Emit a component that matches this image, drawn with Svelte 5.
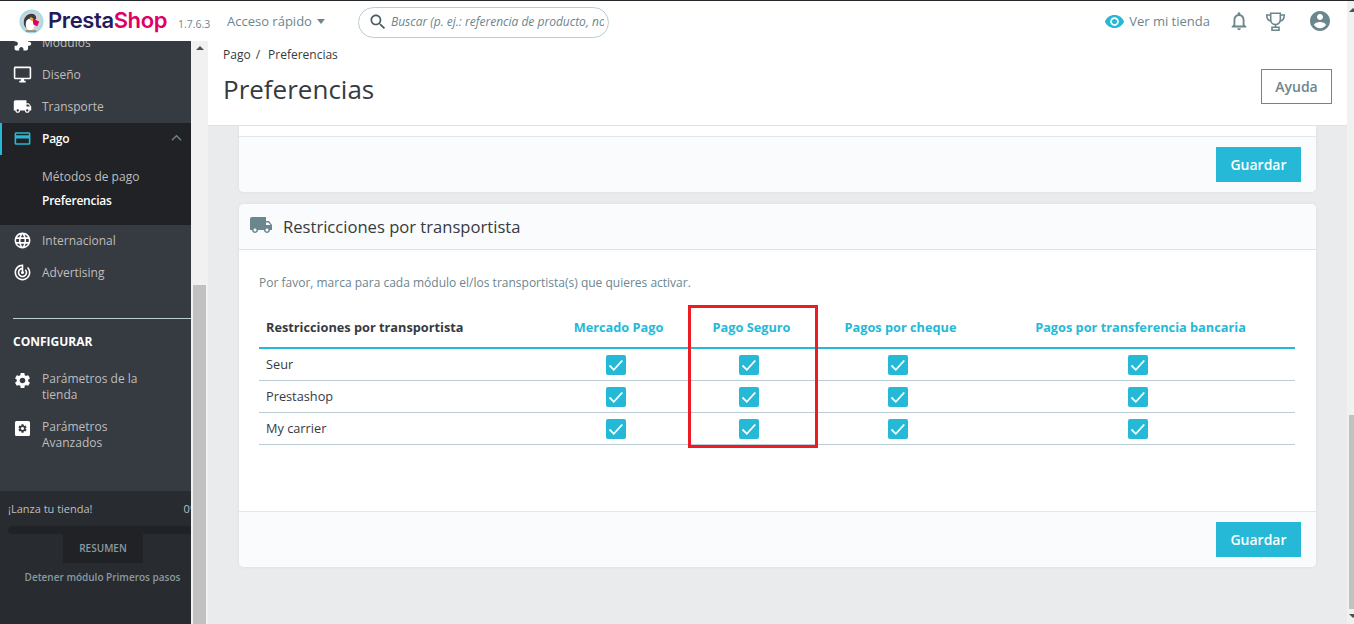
<script>
  const navTop = [
    { label: 'Módulos', d: 'M20.5 11H19V7c0-1.1-.9-2-2-2h-4V3.5C13 2.12 11.88 1 10.5 1S8 2.12 8 3.5V5H4c-1.1 0-1.99.9-1.99 2v3.8H3.5c1.49 0 2.7 1.21 2.7 2.7s-1.21 2.7-2.7 2.7H2V20c0 1.1.9 2 2 2h3.8v-1.5c0-1.49 1.21-2.7 2.7-2.7 1.49 0 2.7 1.21 2.7 2.7V22H17c1.1 0 2-.9 2-2v-4h1.5c1.38 0 2.5-1.12 2.5-2.5S21.88 11 20.5 11z' },
    { label: 'Diseño', d: 'M21 2H3c-1.1 0-2 .9-2 2v12c0 1.1.9 2 2 2h7v2H8v2h8v-2h-2v-2h7c1.1 0 2-.9 2-2V4c0-1.1-.9-2-2-2zm0 14H3V4h18v12z' },
    { label: 'Transporte', d: truck() }
  ];
  const navBottom = [
    { label: 'Internacional', d: 'M11.99 2C6.47 2 2 6.48 2 12s4.47 10 9.99 10C17.52 22 22 17.52 22 12S17.52 2 11.99 2zm6.93 6h-2.95c-.32-1.25-.78-2.45-1.38-3.56 1.84.63 3.37 1.91 4.33 3.56zM12 4.04c.83 1.2 1.48 2.53 1.91 3.96h-3.82c.43-1.43 1.08-2.76 1.91-3.96zM4.26 14C4.1 13.36 4 12.69 4 12s.1-1.36.26-2h3.38c-.08.66-.14 1.32-.14 2 0 .68.06 1.34.14 2H4.26zm.82 2h2.95c.32 1.25.78 2.45 1.38 3.56-1.84-.63-3.37-1.9-4.33-3.56zm2.95-8H5.08c.96-1.66 2.49-2.93 4.33-3.56C8.81 5.55 8.35 6.75 8.03 8zM12 19.96c-.83-1.2-1.48-2.53-1.91-3.96h3.82c-.43 1.43-1.08 2.76-1.91 3.96zM14.34 14H9.66c-.09-.66-.16-1.32-.16-2 0-.68.07-1.35.16-2h4.68c.09.65.16 1.32.16 2 0 .68-.07 1.34-.16 2zm.25 5.56c.6-1.11 1.06-2.31 1.38-3.56h2.95c-.96 1.65-2.49 2.93-4.33 3.56zM16.36 14c.08-.66.14-1.32.14-2 0-.68-.06-1.34-.14-2h3.38c.16.64.26 1.31.26 2s-.1 1.36-.26 2h-3.38z' },
    { label: 'Advertising', d: 'M19.07 4.93l-1.41 1.41C19.1 7.79 20 9.79 20 12c0 4.42-3.58 8-8 8s-8-3.58-8-8c0-4.08 3.05-7.44 7-7.93v2.02C8.16 6.57 6 9.03 6 12c0 3.31 2.69 6 6 6s6-2.69 6-6c0-1.66-.67-3.16-1.76-4.24l-1.41 1.41C15.55 9.9 16 10.9 16 12c0 2.21-1.79 4-4 4s-4-1.79-4-4c0-1.86 1.28-3.41 3-3.86v2.14c-.6.35-1 .98-1 1.72 0 1.1.9 2 2 2s2-.9 2-2c0-.74-.4-1.38-1-1.72V2h-1C6.48 2 2 6.48 2 12s4.48 10 10 10 10-4.48 10-10c0-2.76-1.12-5.26-2.93-7.07z' }
  ];
  const gear = 'M19.14 12.94c.04-.3.06-.61.06-.94 0-.32-.02-.64-.07-.94l2.03-1.58c.18-.14.23-.41.12-.61l-1.92-3.32c-.12-.22-.37-.29-.59-.22l-2.39.96c-.5-.38-1.03-.7-1.62-.94l-.36-2.54c-.04-.24-.24-.41-.48-.41h-3.84c-.24 0-.43.17-.47.41l-.36 2.54c-.59.24-1.13.57-1.62.94l-2.39-.96c-.22-.08-.47 0-.59.22L2.74 8.87c-.12.21-.08.47.12.61l2.03 1.58c-.05.3-.09.63-.09.94s.02.64.07.94l-2.03 1.58c-.18.14-.23.41-.12.61l1.92 3.32c.12.22.37.29.59.22l2.39-.96c.5.38 1.03.7 1.62.94l.36 2.54c.05.24.24.41.48.41h3.84c.24 0 .44-.17.47-.41l.36-2.54c.59-.24 1.13-.56 1.62-.94l2.39.96c.22.08.47 0 .59-.22l1.92-3.32c.12-.22.07-.47-.12-.61l-2.01-1.58zM12 15.6c-1.98 0-3.6-1.62-3.6-3.6s1.62-3.6 3.6-3.6 3.6 1.62 3.6 3.6-1.62 3.6-3.6 3.6z';

  const carriers = ['Seur', 'Prestashop', 'My carrier'];
  const modules = ['Mercado Pago', 'Pago Seguro', 'Pagos por cheque', 'Pagos por transferencia bancaria'];

  function truck() {
    return 'M20 8h-3V4H3c-1.1 0-2 .9-2 2v11h2c0 1.66 1.34 3 3 3s3-1.34 3-3h6c0 1.66 1.34 3 3 3s3-1.34 3-3h2v-5l-3-4zM6 18.5c-.83 0-1.5-.67-1.5-1.5s.67-1.5 1.5-1.5 1.5.67 1.5 1.5-.67 1.5-1.5 1.5zm13.5-9l1.96 2.5H17V9.5h2.5zm-1.5 9c-.83 0-1.5-.67-1.5-1.5s.67-1.5 1.5-1.5 1.5.67 1.5 1.5-.67 1.5-1.5 1.5z';
  }
</script>

{#snippet icon(d, cls = '')}
  <svg class={cls} viewBox="0 0 24 24" fill="currentColor"><path {d} /></svg>
{/snippet}

<div class="page">
  <div class="window">
    <header class="topbar">
      <div class="logo">
        <svg class="puffin" viewBox="0 0 26 26">
          <circle cx="13" cy="13" r="12.5" fill="#a4dbe8" />
          <circle cx="13" cy="13" r="10.5" fill="#cfd3d4" />
          <path d="M5 14c0-6 4-9 8-9 3 0 5 2 5 5l-3 3-1 7H8c-2-1-3-3-3-6z" fill="#3a3c45" />
          <path d="M8 12c2-3 6-3 7 0l1 5c0 3-2 5-4 5-3 0-5-2-5-5 0-2 0-3 1-5z" fill="#fff" />
          <path d="M14 10l7 3-2 5-4-2z" fill="#df0067" />
          <path d="M12 8l3 2-1 3-3-2z" fill="#f5a623" />
          <path d="M7 22h11v2H7z" fill="#9a8f7a" />
        </svg>
        <span class="wordmark"><span class="presta">Presta</span><span class="shop">Shop</span></span>
        <span class="version">1.7.6.3</span>
      </div>
      <div class="quick">Acceso rápido <span class="caret"></span></div>
      <div class="search">
        <svg viewBox="0 0 24 24" fill="currentColor"><path d="M15.5 14h-.79l-.28-.27C15.41 12.59 16 11.11 16 9.5 16 5.91 13.09 3 9.5 3S3 5.91 3 9.5 5.91 16 9.5 16c1.61 0 3.09-.59 4.23-1.57l.27.28v.79l5 4.99L20.49 19l-4.99-5zm-6 0C7.01 14 5 11.99 5 9.5S7.01 5 9.5 5 14 7.01 14 9.5 11.99 14 9.5 14z" /></svg>
        <span class="placeholder">Buscar (p. ej.: referencia de producto, nombre de cliente…)</span>
      </div>
      <div class="top-right">
        <svg class="eye" viewBox="0 0 24 24" fill="currentColor"><path d="M12 4.5C7 4.5 2.73 7.61 1 12c1.73 4.39 6 7.5 11 7.5s9.27-3.11 11-7.5c-1.73-4.39-6-7.5-11-7.5zM12 17c-2.76 0-5-2.24-5-5s2.24-5 5-5 5 2.24 5 5-2.24 5-5 5zm0-8c-1.66 0-3 1.34-3 3s1.34 3 3 3 3-1.34 3-3-1.34-3-3-3z" /></svg>
        <span class="shop-link">Ver mi tienda</span>
        <svg class="bell" viewBox="0 0 24 24" fill="currentColor"><path d="M12 22c1.1 0 2-.9 2-2h-4c0 1.1.9 2 2 2zm6-6v-5c0-3.07-1.63-5.64-4.5-6.32V4c0-.83-.67-1.5-1.5-1.5s-1.5.67-1.5 1.5v.68C7.64 5.36 6 7.92 6 11v5l-2 2v1h16v-1l-2-2zm-2 1H8v-6c0-2.48 1.51-4.5 4-4.5s4 2.02 4 4.5v6z" /></svg>
        <svg class="trophy" viewBox="0 0 24 24" fill="none" stroke="currentColor" stroke-width="1.800"><path d="M6.500 2.500h11v7.500a5.500 5.500 0 0 1-11 0z" /><path d="M6.500 4.500H2c0 4.500 1.800 6.500 5 7M17.500 4.500H22c0 4.500-1.800 6.500-5 7M12 15.500v3" /><path d="M8 18.500h8v3.500H8z" /></svg>
        <svg class="account" viewBox="0 0 24 24" fill="currentColor"><path d="M12 2C6.480 2 2 6.480 2 12s4.480 10 10 10 10-4.480 10-10S17.520 2 12 2zm0 3c1.660 0 3 1.340 3 3s-1.340 3-3 3-3-1.340-3-3 1.340-3 3-3zm0 14.200c-2.500 0-4.710-1.280-6-3.220.030-1.990 4-3.080 6-3.080 1.990 0 5.970 1.090 6 3.080-1.290 1.940-3.500 3.220-6 3.220z" /></svg>
      </div>
    </header>

    <div class="body">
      <aside class="sidebar">
        <nav class="nav">
          {#each navTop as item}
            <div class="item">{@render icon(item.d, 'nav-icon')}<span>{item.label}</span></div>
          {/each}
          <div class="item active">
            <svg class="nav-icon" viewBox="0 0 24 24" fill="currentColor"><path d="M20 4H4c-1.110 0-1.990.890-1.990 2L2 18c0 1.110.890 2 2 2h16c1.110 0 2-.890 2-2V6c0-1.110-.890-2-2-2zm0 14H4v-6h16v6zm0-10H4V6h16v2z" /></svg>
            <span>Pago</span>
            <svg class="chevron" viewBox="0 0 12 8" fill="none" stroke="currentColor" stroke-width="1.500"><path d="M1 6.500l5-5 5 5" /></svg>
          </div>
          <div class="submenu">
            <div class="sub">Métodos de pago</div>
            <div class="sub current">Preferencias</div>
          </div>
          {#each navBottom as item}
            <div class="item">{@render icon(item.d, 'nav-icon')}<span>{item.label}</span></div>
          {/each}
          <div class="divider"></div>
          <div class="section">CONFIGURAR</div>
          <div class="item tall">{@render icon(gear, 'nav-icon')}<span>Parámetros de la tienda</span></div>
          <div class="item tall">
            <svg class="nav-icon" viewBox="0 0 24 24"><rect x="2.500" y="2.500" width="19" height="19" rx="2" fill="currentColor" /><g transform="translate(5.400 5.400) scale(.55)"><path d={gear} fill="#363a41" /></g></svg>
            <span>Parámetros Avanzados</span>
          </div>
        </nav>
        <div class="onboarding">
          <div class="launch"><span>¡Lanza tu tienda!</span><span>0%</span></div>
          <div class="progress"></div>
          <div class="resume">RESUMEN</div>
          <div class="stop">Detener módulo Primeros pasos</div>
        </div>
      </aside>

      <div class="side-scroll">
        <span class="arrow"></span>
        <div class="side-thumb"></div>
      </div>

      <main class="main">
        <div class="page-head">
          <div class="crumbs"><span>Pago</span><span class="slash">/</span><span>Preferencias</span></div>
          <div class="title-row">
            <h1>Preferencias</h1>
            <button class="help">Ayuda</button>
          </div>
        </div>

        <div class="content">
          <section class="card cut">
            <div class="stub"></div>
            <div class="card-foot"><button class="save">Guardar</button></div>
          </section>

          <section class="card">
            <div class="card-head">
              {@render icon(truck(), 'head-icon')}
              <h2>Restricciones por transportista</h2>
            </div>
            <div class="card-body">
              <p class="hint">Por favor, marca para cada módulo el/los transportista(s) que quieres activar.</p>
              <div class="table-wrap">
                <table>
                  <colgroup>
                    <col style="width: 290px" />
                    <col style="width: 134px" />
                    <col style="width: 132px" />
                    <col style="width: 166px" />
                    <col style="width: 314px" />
                  </colgroup>
                  <thead>
                    <tr>
                      <th class="first">Restricciones por transportista</th>
                      {#each modules as m}<th>{m}</th>{/each}
                    </tr>
                  </thead>
                  <tbody>
                    {#each carriers as c}
                      <tr>
                        <td class="first">{c}</td>
                        {#each modules as m}
                          <td class="check" title={m}>
                            <span class="box"><svg viewBox="0 0 20 20" fill="none" stroke="#fff" stroke-width="1.800"><path d="M3.500 10.500l4.300 4.300 8.500-9.300" /></svg></span>
                          </td>
                        {/each}
                      </tr>
                    {/each}
                  </tbody>
                </table>
                <div class="marker"></div>
              </div>
            </div>
            <div class="card-foot"><button class="save">Guardar</button></div>
          </section>
        </div>
      </main>
    </div>
  </div>

  <div class="page-scroll">
    <span class="arrow up"></span>
    <div class="page-thumb"></div>
    <span class="arrow down"></span>
  </div>
</div>

<style>
  :global(body) {
    margin: 0;
    overflow: hidden;
    font-family: "Open Sans", "Liberation Sans", sans-serif;
    color: #363a41;
  }

  .page {
    display: flex;
    height: 624px;
    box-sizing: border-box;
    border-top: 1px solid #25282c;
    overflow: hidden;
  }

  .window {
    flex: 1;
    min-width: 0;
    display: flex;
    flex-direction: column;
  }

  /* top bar */
  .topbar {
    height: 40px;
    flex: none;
    display: flex;
    align-items: center;
    background: #fff;
  }

  .logo {
    display: flex;
    align-items: center;
    width: 227px;
    flex: none;
    box-sizing: border-box;
    padding-left: 19px;
  }

  .puffin {
    width: 25px;
    height: 25px;
    flex: none;
  }

  .wordmark {
    margin-left: 4px;
    margin-bottom: 2px;
    font-family: Inter, "Open Sans", sans-serif;
    font-size: 22px;
    font-weight: 600;
    letter-spacing: -0.4px;
    line-height: 28px;
  }

  .presta {
    color: #251b5b;
  }

  .shop {
    color: #df0067;
  }

  .version {
    margin-left: 11px;
    margin-top: 5px;
    font-size: 10.5px;
    color: #6c868e;
  }

  .quick {
    width: 131px;
    flex: none;
    font-size: 13px;
    color: #6c868e;
    display: flex;
    align-items: center;
    gap: 5px;
  }

  .caret {
    border-top: 5px solid #6c868e;
    border-left: 4.5px solid transparent;
    border-right: 4.5px solid transparent;
  }

  .search {
    width: 251px;
    height: 31px;
    flex: none;
    box-sizing: border-box;
    border: 1px solid #bbcdd2;
    border-radius: 16px;
    display: flex;
    align-items: center;
    padding: 0 4px 2px 9px;
    overflow: hidden;
    margin-top: 3px;
    color: #4a5c62;
  }

  .search svg {
    width: 20px;
    height: 20px;
    flex: none;
  }

  .placeholder {
    margin-left: 3px;
    font-size: 12px;
    font-style: italic;
    color: #6c868e;
    white-space: nowrap;
    overflow: hidden;
  }

  .top-right {
    margin-left: auto;
    display: flex;
    align-items: center;
    color: #6c868e;
    padding-right: 15px;
  }

  .eye {
    width: 21px;
    height: 21px;
    color: #25b9d7;
  }

  .shop-link {
    margin-left: 4px;
    font-size: 13px;
  }

  .bell {
    width: 22px;
    height: 22px;
    margin-left: 18px;
  }

  .trophy {
    width: 21px;
    height: 21px;
    margin-left: 15px;
  }

  .account {
    width: 24px;
    height: 24px;
    margin-left: 22px;
  }

  .body {
    flex: 1;
    min-height: 0;
    display: flex;
  }

  /* sidebar */
  .sidebar {
    width: 191px;
    flex: none;
    background: #363a41;
    display: flex;
    flex-direction: column;
    overflow: hidden;
  }

  .nav {
    flex: 1;
    min-height: 0;
    overflow: hidden;
  }

  .nav > :first-child {
    margin-top: -14px;
  }

  .item {
    display: flex;
    align-items: center;
    height: 32px;
    box-sizing: border-box;
    padding: 0 0 2px 13px;
    font-size: 12px;
    color: #bebebe;
    position: relative;
  }

  .item :global(.nav-icon) {
    width: 19px;
    height: 19px;
    flex: none;
    margin-right: 10px;
    color: #fff;
  }

  .item.active {
    background: #202226;
    color: #fff;
    font-weight: 600;
    letter-spacing: -0.25px;
    box-shadow: inset 2px 0 0 #25b9d7;
  }

  .item.active .nav-icon {
    color: #25b9d7;
  }

  .chevron {
    width: 11px;
    height: 8px;
    margin-left: auto;
    margin-right: 9px;
    color: #6c868e;
  }

  .submenu {
    background: #202226;
    padding: 10px 0 12px 42px;
  }

  .sub {
    height: 24px;
    line-height: 24px;
    font-size: 12px;
    color: #bebebe;
  }

  .sub.current {
    color: #fff;
    font-weight: 600;
    letter-spacing: -0.25px;
  }

  .divider {
    height: 1px;
    margin: 29px 0 0 13px;
    background: #bbcdd2;
  }

  .section {
    margin: 14px 0 20px 13px;
    font-size: 12px;
    font-weight: 700;
    line-height: 18px;
    color: #fff;
  }

  .item.tall {
    align-items: flex-start;
    height: auto;
    line-height: 16px;
    padding: 0 30px 0 13px;
    margin-bottom: 16px;
  }

  .onboarding {
    height: 133px;
    flex: none;
    background: #282b30;
    padding-top: 9px;
    box-sizing: border-box;
  }

  .launch {
    display: flex;
    justify-content: space-between;
    padding-left: 8px;
    margin-right: -8px;
    font-size: 11px;
    line-height: 18px;
    color: #bebebe;
  }

  .progress {
    height: 8px;
    margin: 8px -10px 0 8px;
    border-radius: 4px;
    background: #202226;
  }

  .resume {
    width: 80px;
    height: 29px;
    margin: 0 0 0 63px;
    background: #202226;
    color: #8a9ba0;
    font-size: 10px;
    font-weight: 600;
    line-height: 29px;
    text-align: center;
  }

  .stop {
    margin-top: 5px;
    text-align: center;
    padding-left: 14px;
    font-size: 10px;
    font-weight: 600;
    line-height: 18px;
    color: #8a9ba0;
    white-space: nowrap;
  }

  .side-scroll {
    width: 17px;
    flex: none;
    background: #f1f1f1;
    position: relative;
    display: flex;
    flex-direction: column;
    align-items: center;
  }

  .side-scroll .arrow {
    margin-top: 5px;
    border-bottom: 4px solid #505050;
    border-left: 4px solid transparent;
    border-right: 4px solid transparent;
  }

  .side-thumb {
    margin-top: auto;
    width: 13px;
    height: 339px;
    background: #c1c1c1;
  }

  /* main column */
  .main {
    flex: 1;
    min-width: 0;
    display: flex;
    flex-direction: column;
    background: #eaebec;
  }

  .page-head {
    height: 85px;
    flex: none;
    box-sizing: border-box;
    background: #fff;
    border-bottom: 1px solid #dfe3e5;
    padding: 5px 15px 0 15px;
  }

  .crumbs {
    display: flex;
    gap: 5px;
    font-size: 12px;
    line-height: 17px;
    color: #363a41;
  }

  .slash {
    margin-right: 3px;
  }

  .title-row {
    display: flex;
    align-items: flex-start;
    justify-content: space-between;
    margin-top: 6px;
  }

  h1 {
    margin: 2px 0 0;
    font-size: 26px;
    font-weight: 400;
    line-height: 36px;
    color: #363a41;
  }

  .help {
    width: 71px;
    height: 35px;
    box-sizing: border-box;
    background: #fff;
    border: 1px solid #6c868e;
    color: #6c868e;
    font: 600 14px "Open Sans", sans-serif;
  }

  .content {
    flex: 1;
    padding: 0 31px;
    overflow: hidden;
  }

  .card {
    background: #fff;
    border-radius: 0 0 5px 5px;
    box-shadow: 0 0 4px rgba(0, 0, 0, 0.06);
    margin-bottom: 12px;
  }

  .card:not(.cut) {
    border-radius: 5px;
  }

  .stub {
    height: 10px;
  }

  .card-foot {
    height: 56px;
    box-sizing: border-box;
    background: #fafbfc;
    border-top: 1px solid #dfe8ea;
    border-radius: 0 0 5px 5px;
    display: flex;
    justify-content: flex-end;
    align-items: flex-start;
    padding: 10px 15px 0 0;
  }

  .save {
    width: 85px;
    height: 35px;
    border: 0;
    background: #25b9d7;
    color: #fff;
    font: 600 14px "Open Sans", sans-serif;
  }

  .card-head {
    height: 46px;
    box-sizing: border-box;
    background: #fafbfc;
    border-bottom: 1px solid #dfe3e5;
    border-radius: 5px 5px 0 0;
    display: flex;
    align-items: center;
    padding: 0 0 0 10px;
    color: #6c868e;
  }

  .card-head :global(.head-icon) {
    width: 24px;
    height: 24px;
    flex: none;
    margin-right: 10px;
    margin-top: -3px;
  }

  h2 {
    margin: 0;
    font-size: 16.6px;
    font-weight: 400;
    color: #363a41;
  }

  .card-body {
    height: 261px;
    box-sizing: border-box;
    padding: 24px 21px 0 20px;
  }

  .hint {
    margin: 0;
    font-size: 12px;
    line-height: 18px;
    color: #6c868e;
  }

  .table-wrap {
    position: relative;
    margin-top: 16px;
  }

  table {
    width: 1036px;
    table-layout: fixed;
    border-collapse: collapse;
  }

  th {
    height: 37px;
    padding: 0 0 2px 5px;
    border-bottom: 2px solid #25b9d7;
    font-size: 12.75px;
    font-weight: 700;
    color: #25b9d7;
    text-align: center;
  }

  th.first {
    padding-left: 7px;
    text-align: left;
    color: #363a41;
  }

  td {
    height: 31px;
    padding: 0;
    border-bottom: 1px solid #bbcdd2;
    font-size: 12.75px;
    color: #363a41;
  }

  td.first {
    height: 29px;
    padding: 0 0 2px 7px;
  }

  td.check {
    text-align: center;
  }

  .box {
    display: inline-block;
    width: 20px;
    height: 20px;
    border-radius: 2px;
    background: #25b9d7;
    vertical-align: middle;
  }

  .box svg {
    display: block;
    width: 20px;
    height: 20px;
  }

  .marker {
    position: absolute;
    left: 429px;
    top: -3px;
    width: 130px;
    height: 143px;
    box-sizing: border-box;
    border: 3px solid #ed1c24;
  }

  /* page scrollbar, cut off by the window edge */
  .page-scroll {
    width: 7px;
    flex: none;
    background: #f1f1f1;
    display: flex;
    flex-direction: column;
    align-items: flex-start;
    position: relative;
  }

  .page-thumb {
    position: absolute;
    left: 2px;
    right: 0;
    top: 414px;
    height: 194px;
    background: #c1c1c1;
  }

  .page-scroll .arrow {
    position: absolute;
    left: 2px;
    border-left: 4px solid transparent;
    border-right: 4px solid transparent;
  }

  .page-scroll .arrow.up {
    top: 7px;
    border-bottom: 4px solid #505050;
  }

  .page-scroll .arrow.down {
    bottom: 6px;
    border-top: 4px solid #505050;
  }
</style>
